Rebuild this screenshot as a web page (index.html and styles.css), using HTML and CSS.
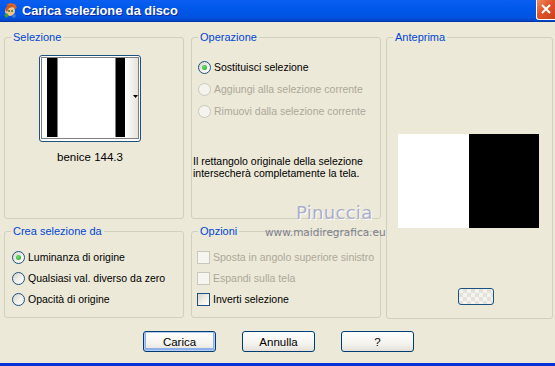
FILE: index.html
```html
<!DOCTYPE html>
<html lang="it">
<head>
  <meta charset="UTF-8">
  <title>Carica selezione da disco</title>
  <link rel="stylesheet" href="styles.css">
</head>
<body>

  <div class="window">
    <!-- Barra del titolo -->
    <div class="titlebar">
      <svg class="app-icon" width="15" height="16" viewBox="0 0 15 16">
        <path d="M3 2 L7 0 L12 1 L14 5 L12 6 L9 4 Z" fill="#D8642A"/>
        <circle cx="7" cy="8" r="5" fill="#F4C48C"/>
        <path d="M2 7 L4 3 L9 2 L12 5 L10 4 L6 5 L4 9 Z" fill="#C85A1E"/>
        <circle cx="6" cy="8" r="1" fill="#2E7D32"/>
        <circle cx="9" cy="8" r="1" fill="#2E7D32"/>
        <path d="M1 12 L4 10 L6 13 L3 15 Z" fill="#3E9B3E"/>
        <path d="M10 11 L13 12 L12 15 L9 14 Z" fill="#4A78D0"/>
      </svg>
      <span class="title">Carica selezione da disco</span>
      <span class="close-btn">
        <svg width="16" height="17" viewBox="0 0 16 17">
          <path d="M4 4 L12 12 M12 4 L4 12" stroke="#fff" stroke-width="2"/>
        </svg>
      </span>
    </div>

    <div class="client">
      <div class="groups">

        <div class="group sel-group">
          <span class="group-title">Selezione</span>
          <div class="thumb-col">
            <div class="thumb">
              <svg width="100" height="85" viewBox="0 0 100 85">
                <defs>
                  <linearGradient id="side" x1="0" x2="1" y1="0" y2="0">
                    <stop offset="0" stop-color="#ffffff"/>
                    <stop offset="1" stop-color="#e4e3dc"/>
                  </linearGradient>
                </defs>
                <rect x="85" y="2" width="13" height="80" fill="url(#side)"/>
                <rect x="7" y="2" width="10" height="79" fill="#000"/>
                <rect x="17" y="2" width="1" height="79" fill="#808080"/>
                <rect x="75" y="2" width="1" height="79" fill="#808080"/>
                <rect x="76" y="2" width="9" height="79" fill="#000"/>
                <polygon points="93,39 98,39 95.5,42" fill="#000"/>
                <rect x="1.5" y="1.5" width="97" height="81" fill="none" stroke="#000" stroke-dasharray="1 1"/>
              </svg>
            </div>
            <div class="thumb-name">benice 144.3</div>
          </div>
        </div>

        <div class="group oper-group">
          <span class="group-title">Operazione</span>
          <div class="options">
            <label class="opt"><span class="radio checked"></span>Sostituisci selezione</label>
            <label class="opt disabled"><span class="radio"></span>Aggiungi alla selezione corrente</label>
            <label class="opt disabled"><span class="radio"></span>Rimuovi dalla selezione corrente</label>
          </div>
          <p class="note">Il rettangolo originale della selezione<br>intersecherà completamente la tela.</p>
        </div>

        <div class="group preview-group">
          <span class="group-title">Anteprima</span>
          <div class="preview">
            <div class="half white"></div>
            <div class="half black"></div>
          </div>
          <div class="bg-btn"></div>
        </div>

        <div class="group crea-group">
          <span class="group-title">Crea selezione da</span>
          <div class="options small">
            <label class="opt"><span class="radio checked"></span>Luminanza di origine</label>
            <label class="opt"><span class="radio"></span>Qualsiasi val. diverso da zero</label>
            <label class="opt"><span class="radio"></span>Opacità di origine</label>
          </div>
        </div>

        <div class="group opz-group">
          <span class="group-title">Opzioni</span>
          <div class="options small">
            <label class="opt disabled"><span class="check"></span>Sposta in angolo superiore sinistro</label>
            <label class="opt disabled"><span class="check"></span>Espandi sulla tela</label>
            <label class="opt"><span class="check"></span>Inverti selezione</label>
          </div>
        </div>

      </div>

      <div class="buttons">
        <button class="btn default">Carica</button>
        <button class="btn">Annulla</button>
        <button class="btn">?</button>
      </div>
    </div>

    <!-- Firma sopra l'immagine -->
    <div class="watermark">
      <span class="wm-name">Pinuccia</span>
      <span class="wm-site">www.maidiregrafica.eu</span>
    </div>
  </div>

</body>
</html>
```

FILE: styles.css
```css
body {
  margin: 0;
  font-family: "Liberation Sans", Arial, sans-serif;
  font-size: 10.5px;
  color: #000;
  background: #ece9d8;
}

.window {
  position: relative;
  width: 555px;
  height: 366px;
  display: flex;
  flex-direction: column;
  background: #ece9d8;
  border-bottom: 3px solid #0831d9;
  box-sizing: border-box;
  overflow: hidden;
}

/* barra del titolo */
.titlebar {
  height: 21px;
  display: flex;
  align-items: center;
  background: linear-gradient(#0a5ff0, #0058ea 40%, #0053e1 80%, #0044c8);
  border-bottom: 1px solid #0036a8;
  flex: none;
}

.app-icon {
  margin: 0 4px 0 3px;
}

.title {
  color: #fff;
  font-weight: bold;
  font-size: 12.8px;
  text-shadow: 1px 1px 0 #0a2a9a;
  margin-top: -1px;
}

.close-btn {
  margin-left: auto;
  align-self: flex-start;
  width: 18px;
  height: 19px;
  border-left: 1px solid #fff;
  border-bottom: 1px solid #fff;
  border-radius: 0 0 0 3px;
  background: linear-gradient(135deg, #f08a60, #e0542a 45%, #c8401c);
  display: flex;
  align-items: center;
  justify-content: center;
}

/* area client */
.client {
  flex: 1;
  padding: 15px 0 0 4px;
}

.groups {
  display: grid;
  grid-template-columns: 180px 7px 190px 5px 167px;
  grid-template-rows: 182px 12px 88px;
}

.group {
  position: relative;
  border: 1px solid #d0d0bf;
  border-radius: 3px;
}

.group-title {
  position: absolute;
  top: -7px;
  left: 6px;
  padding: 0 2px;
  line-height: 13px;
  font-size: 11px;
  background: #ece9d8;
  color: #0046d5;
}

.sel-group {
  grid-column: 1;
  grid-row: 1;
  height: 180px;
}

.oper-group {
  grid-column: 3;
  grid-row: 1;
  height: 180px;
}

.preview-group {
  grid-column: 5;
  grid-row: 1 / 4;
  height: 280px;
}

.crea-group {
  grid-column: 1;
  grid-row: 3;
  height: 85px;
}

.opz-group {
  grid-column: 3;
  grid-row: 3;
  height: 85px;
}

/* selezione */
.thumb-col {
  width: 102px;
  margin: 17px 0 0 34px;
}

.thumb {
  width: 100px;
  height: 85px;
  border: 1px solid #1c5180;
  border-radius: 3px;
  background: #fff;
}

.thumb svg {
  display: block;
}

.thumb-name {
  text-align: center;
  margin-top: 9px;
  line-height: 13px;
  font-size: 11.5px;
}

/* opzioni e radio */
.options {
  display: flex;
  flex-direction: column;
  gap: 8px;
  padding: 22px 0 0 6px;
}

.options.small {
  gap: 7px;
  padding: 18px 0 0 7px;
}

.opz-group .options.small {
  padding-left: 5px;
}

.opt {
  display: flex;
  align-items: center;
  gap: 3px;
  height: 14px;
  white-space: nowrap;
}

.opt.disabled {
  color: #aca899;
}

.radio {
  position: relative;
  flex: none;
  width: 11px;
  height: 11px;
  border: 1px solid #1c5180;
  border-radius: 50%;
  background: linear-gradient(135deg, #d6d4cb, #f4f3ee 60%, #fff);
}

.radio.checked::after {
  content: "";
  position: absolute;
  left: 3px;
  top: 3px;
  width: 5px;
  height: 5px;
  border-radius: 50%;
  background: radial-gradient(circle at 40% 40%, #6ee06e, #21a121);
}

.disabled .radio {
  border-color: #cac8bb;
  background: #f4f3ee;
}

.check {
  flex: none;
  width: 11px;
  height: 11px;
  border: 1px solid #1c5180;
  background: linear-gradient(135deg, #d6d4cb, #f4f3ee 60%, #fff);
}

.disabled .check {
  border-color: #cac8bb;
  background: #f6f5f0;
}

.note {
  margin: 37px 0 0 1px;
  line-height: 12px;
}

/* anteprima */
.preview {
  display: flex;
  width: 141px;
  height: 94px;
  margin: 96px 0 0 11px;
}

.half {
  flex: 1;
}

.half.white {
  background: #fff;
}

.half.black {
  background: #000;
}

.bg-btn {
  width: 34px;
  height: 15px;
  margin: 60px 0 0 71px;
  border: 1px solid #1c5180;
  border-radius: 3px;
  background-color: #f4f3ee;
  background-image:
    linear-gradient(45deg, #e2e1dc 25%, transparent 25%, transparent 75%, #e2e1dc 75%),
    linear-gradient(45deg, #e2e1dc 25%, transparent 25%, transparent 75%, #e2e1dc 75%);
  background-size: 8px 8px;
  background-position: 0 0, 4px 4px;
}

/* pulsanti */
.buttons {
  display: flex;
  gap: 26px;
  margin: 12px 0 0 139px;
}

.btn {
  width: 73px;
  height: 21px;
  padding: 0;
  font-family: "Liberation Sans", Arial, sans-serif;
  font-size: 11.5px;
  color: #000;
  border: 1px solid #003c74;
  border-radius: 3px;
  background: linear-gradient(#ffffff, #f4f3ee 60%, #e3e1d8);
}

.btn.default {
  box-shadow: inset 0 0 0 1px #b6cdf3, inset 0 -1px 0 2px #8eb0ea;
}

/* firma */
.watermark {
  position: absolute;
  left: 265px;
  top: 202px;
  width: 124px;
  display: flex;
  flex-direction: column;
  pointer-events: none;
}

.wm-name {
  margin-left: 31px;
  font-family: "DejaVu Sans", sans-serif;
  font-size: 18px;
  line-height: 22px;
  letter-spacing: 0.3px;
  color: #abadcc;
  text-shadow: 1px 1px 0 #fff;
}

.wm-site {
  font-family: "DejaVu Sans", sans-serif;
  font-size: 10.5px;
  line-height: 13px;
  color: #7e7e8e;
  margin-top: 2px;
}
```
